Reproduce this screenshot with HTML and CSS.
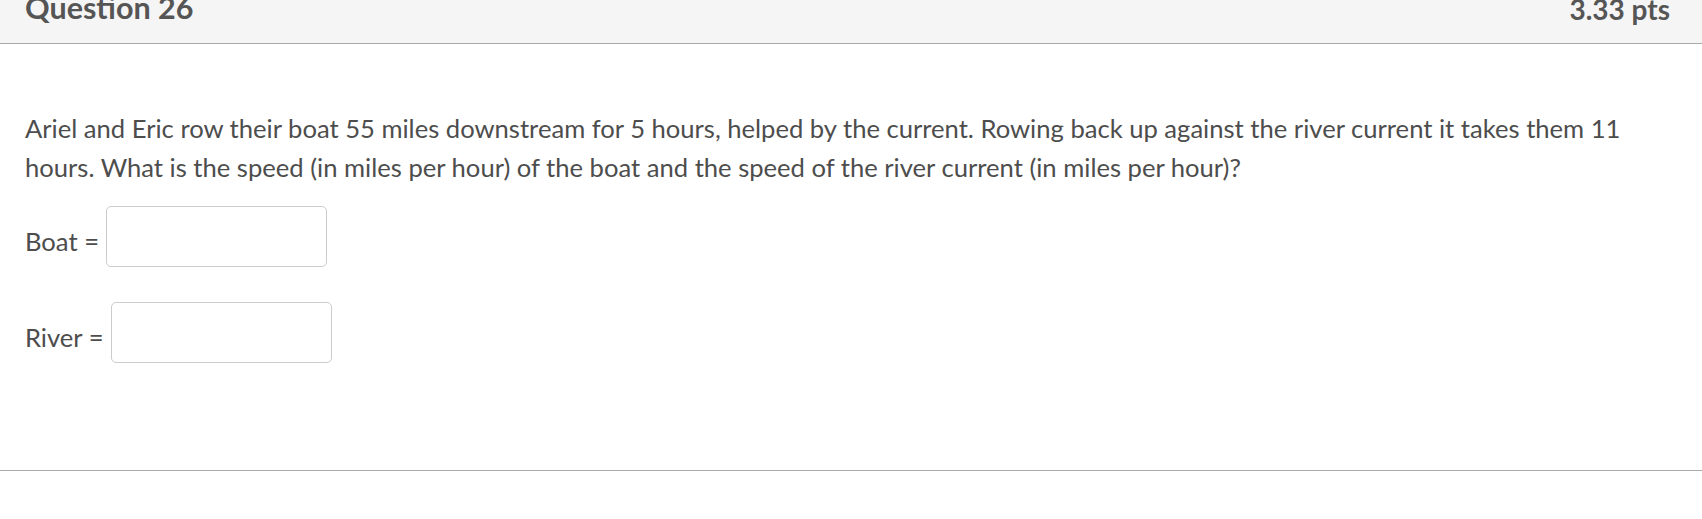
FILE: index.html
```html
<!DOCTYPE html>
<html lang="en">
<head>
<meta charset="utf-8">
<title>Question 26</title>
<link rel="stylesheet" href="styles.css">
</head>
<body>
<div class="question">
  <div class="q-header">
    <span class="q-title">Question 26</span>
    <span class="q-pts">3.33 pts</span>
  </div>
  <div class="q-body">
    <p class="q-text">Ariel and Eric row their boat 55 miles downstream for 5 hours, helped by the current. Rowing back up against the river current it takes them 11 hours. What is the speed (in miles per hour) of the boat and the speed of the river current (in miles per hour)?</p>
    <div class="q-row">
      <span class="q-label">Boat =</span>
      <input class="q-input" type="text" aria-label="Boat">
    </div>
    <div class="q-row">
      <span class="q-label">River =</span>
      <input class="q-input" type="text" aria-label="River">
    </div>
  </div>
</div>
</body>
</html>
```

FILE: styles.css
```css
html, body {
  margin: 0;
  padding: 0;
  background: #fff;
}

body {
  font-family: Lato, "Open Sans", sans-serif;
  color: #4d4d4d;
}

.question {
  border-bottom: 1px solid #aaa;
}

.q-header {
  display: flex;
  justify-content: space-between;
  align-items: flex-end;
  background: #f5f5f5;
  border-bottom: 1px solid #aaa;
  height: 44px;
  padding: 0 32px 0 25px;
  overflow: hidden;
  box-sizing: border-box;
}

.q-title,
.q-pts {
  font-weight: 700;
  line-height: 30px;
  color: #555;
  margin-bottom: 21px;
}

.q-title {
  font-size: 30.5px;
}

.q-pts {
  font-size: 28px;
  margin-bottom: 19px;
}

.q-body {
  padding: 65px 32px 107px 25px;
}

.q-text {
  margin: 0;
  font-size: 25.6px;
  line-height: 39px;
}

.q-row {
  display: flex;
  align-items: center;
  gap: 7px;
  margin-top: 19px;
  font-size: 25.6px;
}

.q-row + .q-row {
  margin-top: 35px;
}

.q-label {
  line-height: 39px;
  padding-top: 10px;
}

.q-input {
  width: 221px;
  height: 61px;
  box-sizing: border-box;
  border: 1px solid #ccc;
  border-radius: 5px;
  background: #fff;
  margin: 0;
  padding: 0 10px;
  font: inherit;
}
```
